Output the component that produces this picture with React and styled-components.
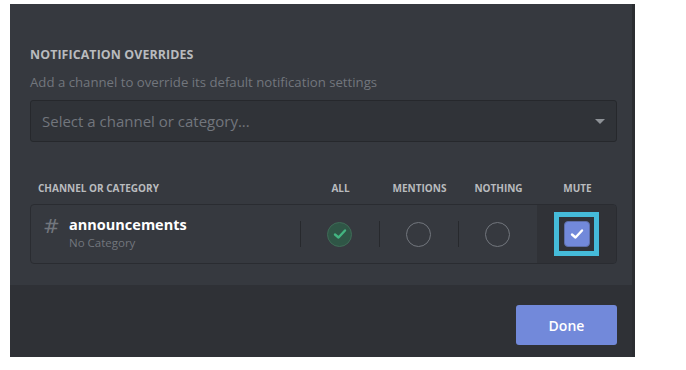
import React from 'react';
import styled, { createGlobalStyle } from 'styled-components';

const GlobalStyle = createGlobalStyle`
	body {
		margin: 0;
		background: #ffffff;
		font-family: 'Open Sans', 'Noto Sans', sans-serif;
	}
`;

const columns = ['ALL', 'MENTIONS', 'NOTHING', 'MUTE'];

const App = () => {
	return (
		<>
			<GlobalStyle />
			<Page>
				<Modal>
					<Content>
						<Title>Notification Overrides</Title>
						<Hint>Add a channel to override its default notification settings</Hint>
						<Select>
							<span>Select a channel or category...</span>
							<Caret />
						</Select>
						<TableHead>
							<HeadCell $left>Channel or Category</HeadCell>
							{columns.map((c) => (
								<HeadCell key={c}>{c}</HeadCell>
							))}
						</TableHead>
						<Row>
							<ChannelCell>
								<Hash>#</Hash>
								<div>
									<ChannelName>announcements</ChannelName>
									<Category>No Category</Category>
								</div>
							</ChannelCell>
							<OptionCell $divider>
								<Radio $checked>
									<svg width="14" height="12" viewBox="0 0 14 12">
										<path d="M2 6.5 L5.5 9.5 L12 2.5" fill="none" stroke="#43b581" strokeWidth="2.4" strokeLinecap="round" strokeLinejoin="round" />
									</svg>
								</Radio>
							</OptionCell>
							<OptionCell $divider>
								<Radio />
							</OptionCell>
							<OptionCell $divider>
								<Radio />
							</OptionCell>
							<MuteCell>
								<Highlight>
									<Checkbox>
										<svg width="14" height="12" viewBox="0 0 14 12">
											<path d="M2 6.5 L5.5 9.5 L12 2.5" fill="none" stroke="#ffffff" strokeWidth="2.4" strokeLinecap="round" strokeLinejoin="round" />
										</svg>
									</Checkbox>
								</Highlight>
							</MuteCell>
						</Row>
					</Content>
					<Footer>
						<DoneButton>Done</DoneButton>
					</Footer>
				</Modal>
			</Page>
		</>
	);
};

const Page = styled.div`
	padding: 4px 0 0 10px;
`;

const Modal = styled.div`
	width: 625px;
	height: 353px;
	display: flex;
	flex-direction: column;
	border-right: 3px solid #2b2d31;
	box-sizing: border-box;
`;

const Content = styled.div`
	height: 281px;
	background: #36393f;
	padding: 43px 15px 0 20px;
	box-sizing: border-box;
`;

const Title = styled.h2`
	margin: 0;
	font-size: 12.4px;
	line-height: 16px;
	font-weight: 700;
	text-transform: uppercase;
	color: #b9bbbe;
	letter-spacing: 0.1px;
`;

const Hint = styled.div`
	margin-top: 10px;
	font-size: 13.2px;
	line-height: 18px;
	color: #72767d;
`;

const Select = styled.div`
	margin-top: 9px;
	height: 42px;
	display: flex;
	align-items: center;
	justify-content: space-between;
	padding: 0 11px;
	box-sizing: border-box;
	background: #303338;
	border: 1px solid #26282c;
	border-radius: 3px;
	color: #72767d;
	font-size: 15px;
`;

const Caret = styled.div`
	width: 0;
	height: 0;
	border-left: 5px solid transparent;
	border-right: 5px solid transparent;
	border-top: 5px solid #8e9297;
`;

const grid = `
	display: grid;
	grid-template-columns: 1fr 79px 79px 79px 79px;
`;

const TableHead = styled.div`
	${grid}
	margin-top: 38px;
	height: 16px;
	align-items: center;
`;

const HeadCell = styled.div`
	font-size: 10px;
	font-weight: 700;
	color: #b9bbbe;
	text-transform: uppercase;
	text-align: ${(p) => (p.$left ? 'left' : 'center')};
	padding-left: ${(p) => (p.$left ? '8px' : '0')};
`;

const Row = styled.div`
	${grid}
	margin-top: 8px;
	height: 60px;
	border: 1px solid #2a2c31;
	border-radius: 4px;
	box-sizing: border-box;
	overflow: hidden;
`;

const ChannelCell = styled.div`
	display: flex;
	align-items: flex-start;
	padding: 10px 0 0 12px;
`;

const Hash = styled.span`
	font-family: 'DejaVu Sans', sans-serif;
	font-size: 20px;
	line-height: 22px;
	color: #72767d;
	width: 26px;
`;

const ChannelName = styled.div`
	font-size: 14.5px;
	font-weight: 700;
	line-height: 20px;
	color: #ffffff;
`;

const Category = styled.div`
	font-size: 11.5px;
	line-height: 16px;
	color: #72767d;
`;

const OptionCell = styled.div`
	position: relative;
	display: flex;
	align-items: center;
	justify-content: center;
	&::before {
		content: '';
		position: absolute;
		left: 0;
		top: 16px;
		height: 26px;
		width: 1px;
		background: ${(p) => (p.$divider ? '#27292d' : 'transparent')};
	}
`;

const Radio = styled.div`
	width: 25px;
	height: 25px;
	border-radius: 50%;
	box-sizing: border-box;
	display: flex;
	align-items: center;
	justify-content: center;
	border: 1.5px solid ${(p) => (p.$checked ? '#3f6b57' : '#72767d')};
	background: ${(p) => (p.$checked ? '#2f5646' : 'transparent')};
`;

const MuteCell = styled.div`
	background: #303237;
	display: flex;
	align-items: center;
	justify-content: center;
`;

const Highlight = styled.div`
	width: 45px;
	height: 44px;
	box-sizing: border-box;
	border: 5px solid #45bbd9;
	display: flex;
	align-items: center;
	justify-content: center;
`;

const Checkbox = styled.div`
	width: 26px;
	height: 26px;
	border-radius: 4px;
	background: #7289da;
	border: 1px solid #5e6ea8;
	box-sizing: border-box;
	display: flex;
	align-items: center;
	justify-content: center;
`;

const Footer = styled.div`
	flex: 1;
	background: #2f3136;
	display: flex;
	justify-content: flex-end;
	align-items: flex-start;
	padding: 20px 15px 0 0;
`;

const DoneButton = styled.button`
	width: 101px;
	height: 40px;
	border: none;
	border-radius: 3px;
	background: #7289da;
	color: #ffffff;
	font-family: 'Open Sans', sans-serif;
	font-size: 14px;
	font-weight: 600;
`;

export default App;
